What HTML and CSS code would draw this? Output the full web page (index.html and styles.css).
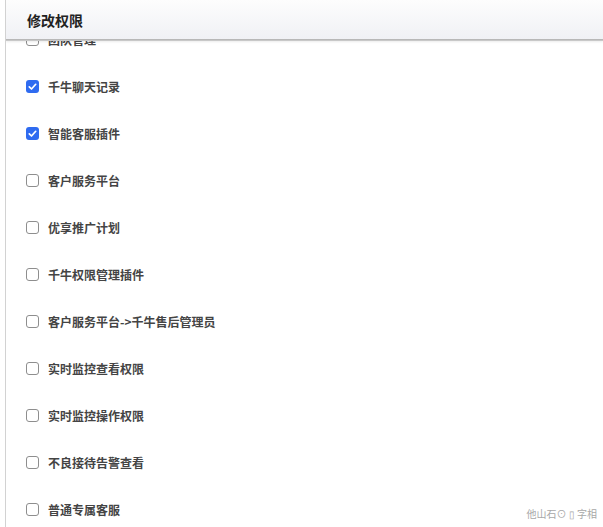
FILE: index.html
```html
<!DOCTYPE html>
<html lang="zh-CN">
<head>
<meta charset="utf-8">
<title>修改权限</title>
<link rel="stylesheet" href="styles.css">
</head>
<body>
<div class="panel">
  <div class="header"><span class="title">修改权限</span></div>
  <ul class="list">
    <li class="row"><span class="box"></span><span class="label">团队管理</span></li>
    <li class="row"><span class="box checked"><svg viewBox="0 0 13 13" width="13" height="13"><path d="M3.3 6.8 L5.5 9 L9.7 4.3" fill="none" stroke="#fff" stroke-width="1.7" stroke-linecap="round" stroke-linejoin="round"/></svg></span><span class="label">千牛聊天记录</span></li>
    <li class="row"><span class="box checked"><svg viewBox="0 0 13 13" width="13" height="13"><path d="M3.3 6.8 L5.5 9 L9.7 4.3" fill="none" stroke="#fff" stroke-width="1.7" stroke-linecap="round" stroke-linejoin="round"/></svg></span><span class="label">智能客服插件</span></li>
    <li class="row"><span class="box"></span><span class="label">客户服务平台</span></li>
    <li class="row"><span class="box"></span><span class="label">优享推广计划</span></li>
    <li class="row"><span class="box"></span><span class="label">千牛权限管理插件</span></li>
    <li class="row"><span class="box"></span><span class="label">客户服务平台-&gt;千牛售后管理员</span></li>
    <li class="row"><span class="box"></span><span class="label">实时监控查看权限</span></li>
    <li class="row"><span class="box"></span><span class="label">实时监控操作权限</span></li>
    <li class="row"><span class="box"></span><span class="label">不良接待告警查看</span></li>
    <li class="row"><span class="box"></span><span class="label">普通专属客服</span></li>
  </ul>
  <div class="watermark">他山石⊙ ▯ 字相</div>
</div>
</body>
</html>
```

FILE: styles.css
```css
html, body {
  margin: 0;
  padding: 0;
  background: #fff;
  overflow: hidden;
}
body {
  font-family: "Noto Sans CJK SC", "Noto Sans", "Liberation Sans", sans-serif;
}
.panel {
  position: relative;
  margin-left: 5px;
  border-left: 1px solid #d2d2d2;
  height: 527px;
  overflow: hidden;
}
.header {
  position: absolute;
  top: 0;
  left: 0;
  right: 0;
  height: 40px;
  box-sizing: border-box;
  padding-left: 21px;
  display: flex;
  align-items: center;
  background: linear-gradient(#fdfdfd, #f0f1f5);
  border-bottom: 1px solid #b8b8b8;
  box-shadow: 0 1px 0 #c8c8c8, 0 2px 2px rgba(0, 0, 0, 0.08);
  z-index: 2;
}
.title {
  font-size: 14px;
  font-weight: bold;
  color: #222;
  line-height: 1;
}
.list {
  list-style: none;
  margin: 0;
  padding: 16px 0 0 20px;
}
.row {
  height: 47px;
  display: flex;
  align-items: center;
  gap: 9px;
}
.box {
  width: 13px;
  height: 13px;
  box-sizing: border-box;
  border: 1px solid #8e8e8e;
  border-radius: 3px;
  background: #fff;
  flex: none;
  display: flex;
}
.box.checked {
  border: none;
  background: #2f6bf0;
}
.box svg {
  display: block;
}
.label {
  font-size: 12px;
  font-weight: bold;
  color: #444;
  line-height: 1;
}
.watermark {
  position: absolute;
  right: 6px;
  bottom: 8px;
  font-size: 10px;
  color: #a8a8a8;
  line-height: 1;
  white-space: pre;
}
```
